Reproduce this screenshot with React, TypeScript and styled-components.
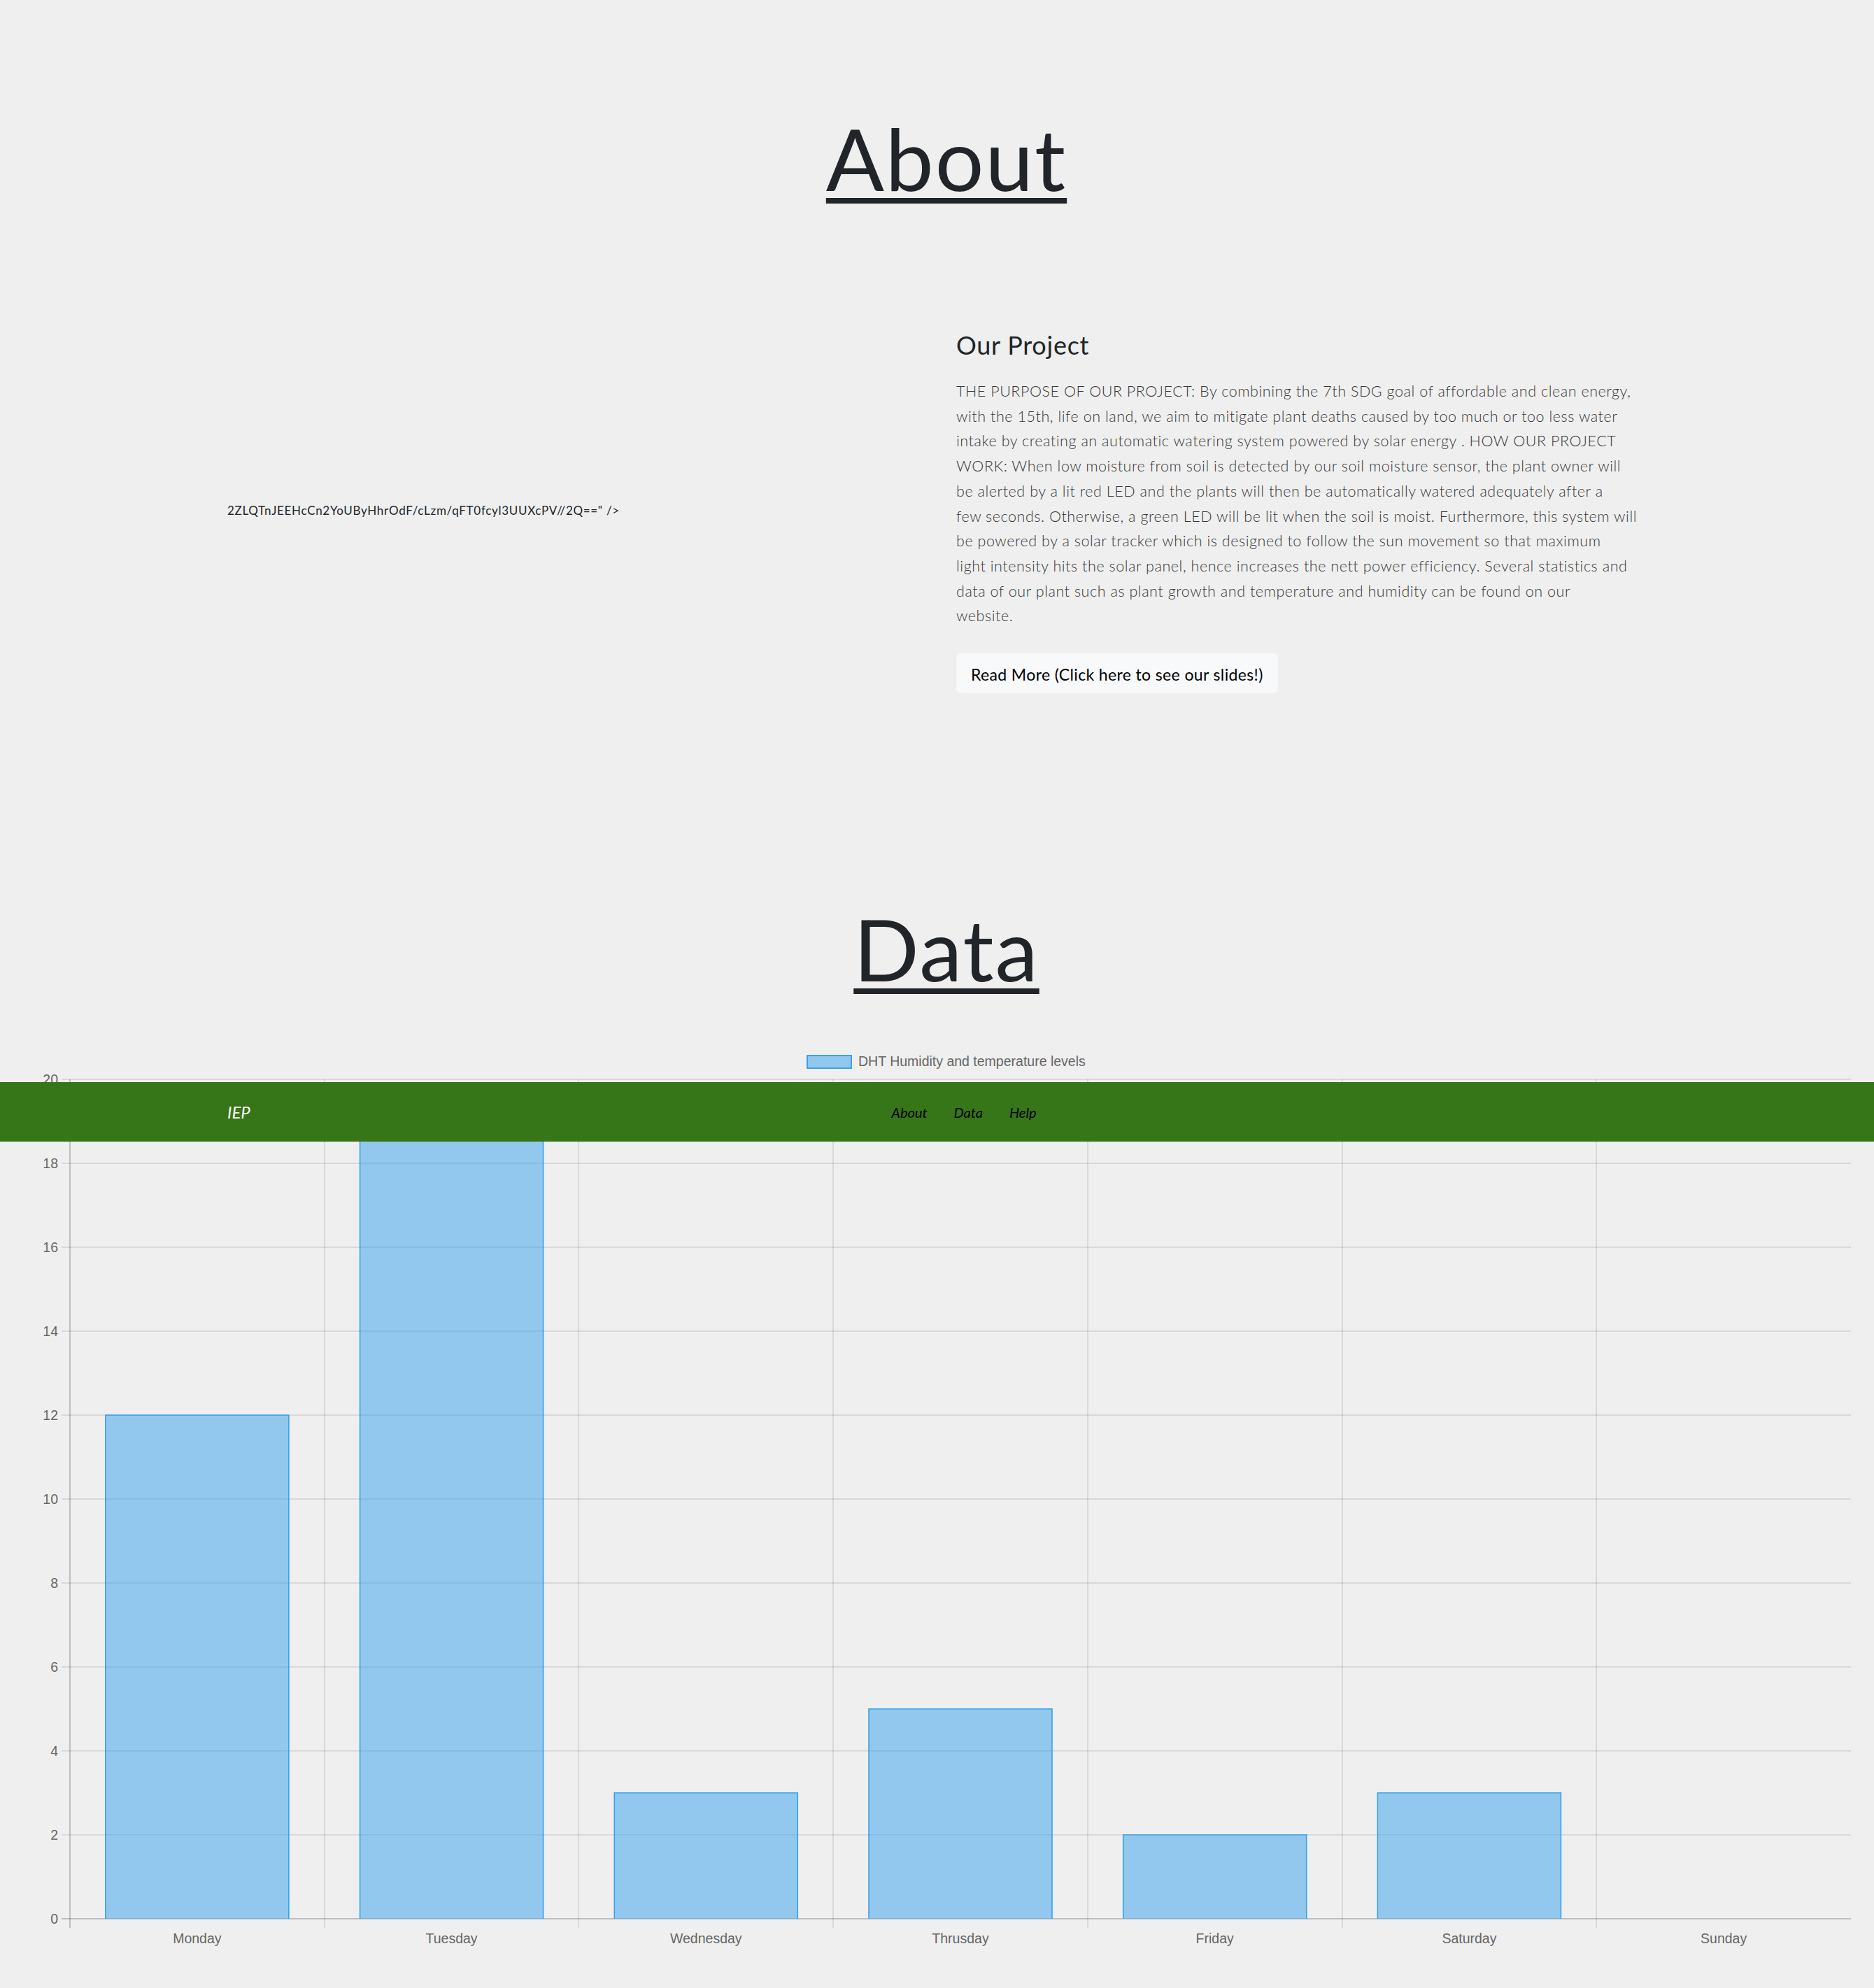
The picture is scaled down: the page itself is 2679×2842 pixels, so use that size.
import React from "react";
import styled, { createGlobalStyle } from "styled-components";

const GlobalStyle = createGlobalStyle`
  html, body {
    margin: 0;
    padding: 0;
    background: #efefef;
  }
  body {
    font-family: Lato, "Open Sans", sans-serif;
    color: #212529;
  }
`;

const Page = styled.div`
  position: relative;
  display: flow-root;
`;

const Container = styled.div`
  width: 2029px;
  margin: 0 auto;
`;

const SectionTitle = styled.h1<{ $mt: number }>`
  margin: ${(p) => p.$mt}px 0 0;
  padding-left: 27px;
  text-align: center;
  font-family: Lato, "Open Sans", sans-serif;
  font-weight: 400;
  font-size: 123px;
  line-height: 1.2;
  letter-spacing: 2px;
  color: #212529;
  text-decoration: underline;
  text-decoration-thickness: 8px;
  text-underline-offset: 10px;
`;

const Row = styled.div`
  display: grid;
  grid-template-columns: 987px 987px;
  column-gap: 55px;
  align-items: center;
  margin-top: 170.4px;
`;

const BrokenImage = styled.div`
  font-size: 17px;
  line-height: 24px;
  letter-spacing: 0.7px;
  color: #212529;
  white-space: nowrap;
`;

const InfoColumn = styled.div`
  display: flex;
  flex-direction: column;
  align-items: flex-start;
`;

const InfoHeading = styled.h3`
  margin: 0 0 23.3px;
  font-weight: 400;
  font-size: 36px;
  line-height: 49.2px;
  letter-spacing: 0.75px;
  color: #212529;
`;

const InfoText = styled.p`
  margin: 0 0 35px;
  font-weight: 300;
  font-size: 21.5px;
  line-height: 35.7px;
  letter-spacing: 0.55px;
  color: #383838;
`;

const ReadMore = styled.a`
  display: inline-block;
  background: #f8f9fa;
  border-radius: 7px;
  padding: 12.5px 21px 10px;
  font-size: 23px;
  line-height: 34.5px;
  letter-spacing: 0.37px;
  color: #000;
  text-decoration: none;
`;

const NavBar = styled.nav`
  position: absolute;
  top: 1547px;
  left: 0;
  right: 0;
  height: 85px;
  background: #367518;
  display: flex;
  align-items: center;
`;

const NavInner = styled(Container)`
  display: flex;
  align-items: center;
`;

const Brand = styled.a`
  font-style: italic;
  font-size: 24px;
  color: #fff;
  text-decoration: none;
  margin-right: 44px;
`;

const NavList = styled.ul`
  flex: 1;
  display: flex;
  justify-content: center;
  gap: 38px;
  list-style: none;
  margin: 0;
  padding: 0;
`;

const NavLink = styled.a`
  font-style: italic;
  font-size: 20px;
  color: #000;
  text-decoration: none;
`;

const ChartSvg = styled.svg`
  display: block;
  margin-top: 60.9px;
  font-family: "Liberation Sans", Arial, sans-serif;
`;

const paragraphLines = [
  "THE PURPOSE OF OUR PROJECT: By combining the 7th SDG goal of affordable and clean energy,",
  "with the 15th, life on land, we aim to mitigate plant deaths caused by too much or too less water",
  "intake by creating an automatic watering system powered by solar energy . HOW OUR PROJECT",
  "WORK: When low moisture from soil is detected by our soil moisture sensor, the plant owner will",
  "be alerted by a lit red LED and the plants will then be automatically watered adequately after a",
  "few seconds. Otherwise, a green LED will be lit when the soil is moist. Furthermore, this system will",
  "be powered by a solar tracker which is designed to follow the sun movement so that maximum",
  "light intensity hits the solar panel, hence increases the nett power efficiency. Several statistics and",
  "data of our plant such as plant growth and temperature and humidity can be found on our",
  "website.",
];

const days: [string, number][] = [
  ["Monday", 12],
  ["Tuesday", 19],
  ["Wednesday", 3],
  ["Thrusday", 5],
  ["Friday", 2],
  ["Saturday", 3],
  ["Sunday", 0],
];

const X0 = 100;
const X1 = 2646;
const Y0 = 2743;
const UNIT = 60;
const CAT = (X1 - X0) / 7;
const BAR_W = 262;
const FILL = "rgba(54,162,235,0.5)";
const STROKE = "rgb(54,162,235)";

function BarChart() {
  const ticks = Array.from({ length: 11 }, (_, i) => i * 2);
  return (
    <ChartSvg width={2679} height={1352} viewBox="0 1490 2679 1352">
      <rect x={1154} y={1509} width={63} height={18} fill={FILL} stroke={STROKE} strokeWidth={2} />
      <text x={1227} y={1524} fontSize={19.5} fill="#666">
        DHT Humidity and temperature levels
      </text>

      {ticks.map((v) => {
        const y = Y0 - v * UNIT;
        return (
          <g key={v}>
            <line
              x1={88}
              x2={X1}
              y1={y}
              y2={y}
              stroke={v === 0 ? "rgba(0,0,0,0.2)" : "rgba(0,0,0,0.09)"}
              strokeWidth={2}
            />
            <text x={83} y={y + 7} fontSize={19.5} fill="#666" textAnchor="end">
              {v}
            </text>
          </g>
        );
      })}

      {Array.from({ length: 7 }, (_, k) => {
        const x = Math.round(X0 + CAT * k);
        return (
          <line
            key={k}
            x1={x}
            x2={x}
            y1={1543}
            y2={2756}
            stroke={k === 0 ? "rgba(0,0,0,0.2)" : "rgba(0,0,0,0.09)"}
            strokeWidth={2}
          />
        );
      })}

      {days.map(([label, v], k) => {
        const cx = X0 + CAT * (k + 0.5);
        const left = cx - BAR_W / 2;
        const right = cx + BAR_W / 2;
        const top = Y0 - v * UNIT;
        return (
          <g key={label}>
            {v > 0 && (
              <>
                <rect x={left} y={top} width={BAR_W} height={Y0 - top} fill={FILL} />
                <polyline
                  points={`${left},${Y0} ${left},${top} ${right},${top} ${right},${Y0}`}
                  fill="none"
                  stroke={STROKE}
                  strokeWidth={1.6}
                />
              </>
            )}
            <text x={cx} y={2778} fontSize={19.5} fill="#666" textAnchor="middle">
              {label}
            </text>
          </g>
        );
      })}
    </ChartSvg>
  );
}

export default function App() {
  return (
    <Page>
      <GlobalStyle />
      <section>
        <SectionTitle $mt={151.5}>About</SectionTitle>
        <Container>
          <Row>
            <BrokenImage>2ZLQTnJEEHcCn2YoUByHhrOdF/cLzm/qFT0fcyl3UUXcPV//2Q==" /&gt;</BrokenImage>
            <InfoColumn>
              <InfoHeading>Our Project</InfoHeading>
              <InfoText>
                {paragraphLines.map((line, i) => (
                  <React.Fragment key={i}>
                    {line}
                    {i < paragraphLines.length - 1 && <br />}
                  </React.Fragment>
                ))}
              </InfoText>
              <ReadMore href="#">Read More (Click here to see our slides!)</ReadMore>
            </InfoColumn>
          </Row>
        </Container>
      </section>
      <section>
        <SectionTitle $mt={290.5}>Data</SectionTitle>
        <BarChart />
      </section>
      <NavBar>
        <NavInner>
          <Brand href="#">IEP</Brand>
          <NavList>
            <li>
              <NavLink href="#">About</NavLink>
            </li>
            <li>
              <NavLink href="#">Data</NavLink>
            </li>
            <li>
              <NavLink href="#">Help</NavLink>
            </li>
          </NavList>
        </NavInner>
      </NavBar>
    </Page>
  );
}
